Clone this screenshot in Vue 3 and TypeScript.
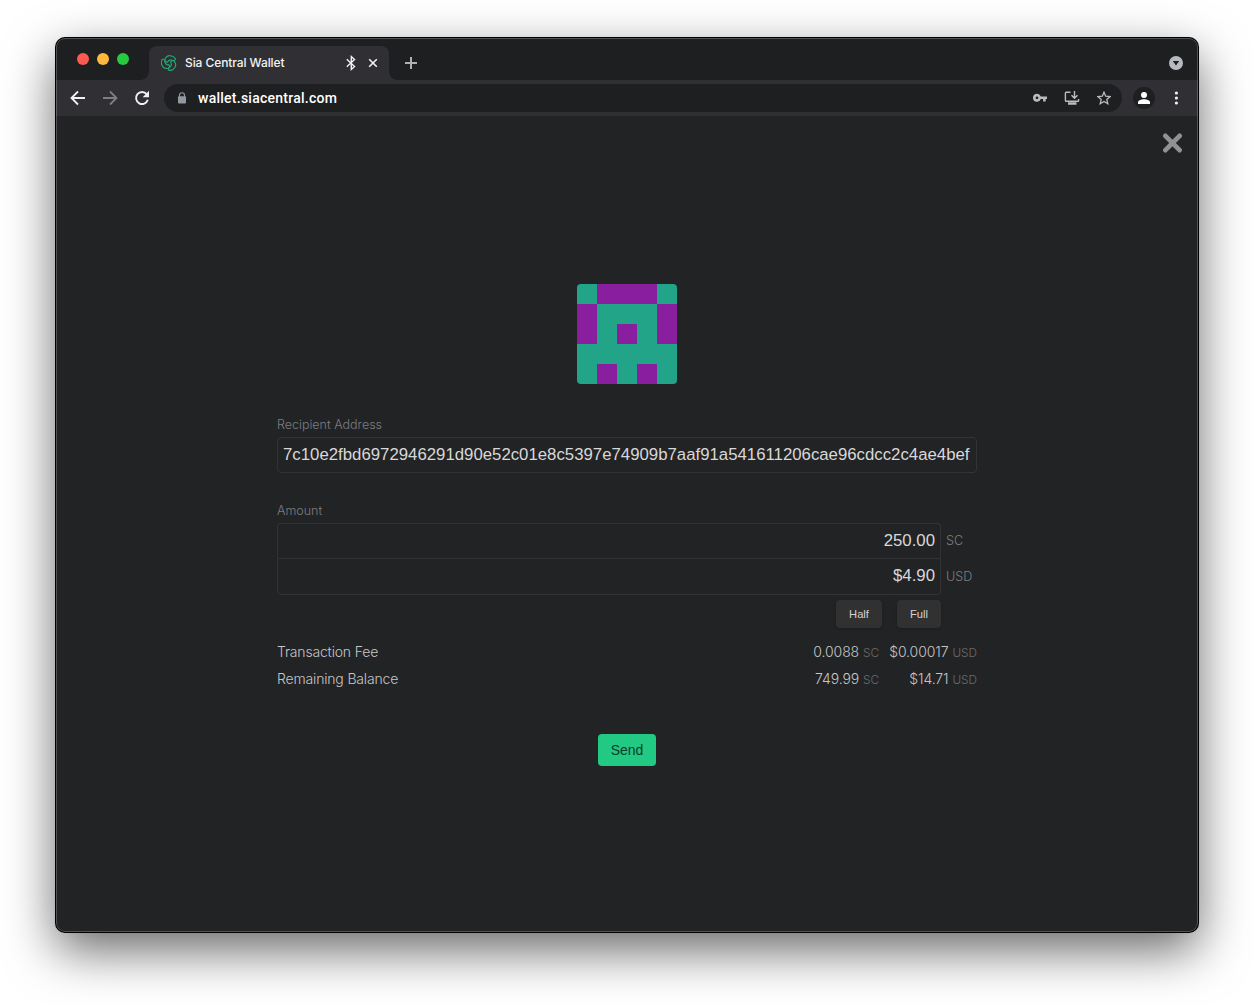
<script setup lang="ts">
import { ref } from 'vue'

interface SummaryRow {
  label: string
  sc: string
  usd: string
}

const address = ref('7c10e2fbd6972946291d90e52c01e8c5397e74909b7aaf91a541611206cae96cdcc2c4ae4bef')
const siacoin = ref('250.00')
const currency = ref('$4.90')

const rows: SummaryRow[] = [
  { label: 'Transaction Fee', sc: '0.0088', usd: '$0.00017' },
  { label: 'Remaining Balance', sc: '749.99', usd: '$14.71' },
]

// 5x5 identicon, 1 marks a purple cell
const identicon = ['01110', '10001', '10101', '00000', '01010'].join('').split('')

// the logo is one lobe, turned three times round the centre
const lobes = [0, 120, 240]
</script>

<template>
  <div class="desktop">
    <div class="window">
      <header class="tab-strip">
        <div class="lights"><i class="red" /><i class="yellow" /><i class="green" /></div>
        <div class="tab">
          <svg class="favicon" width="16" height="16" viewBox="0 0 16 16" fill="none" stroke="#1fa873" stroke-width="1.15" stroke-linejoin="round">
            <path
              v-for="angle in lobes"
              :key="angle"
              d="M3.800 4.800C4.600 2.200 6.600.6 9 .7c2.300.1 4.300 1.200 5.400 3.100.2 1.400-1.400 2.100-2.900 1.500C9.200 4.300 7.400 5 6.400 7.200 4.700 7 3.700 6.100 3.800 4.800z"
              :transform="`rotate(${angle} 8 8)`"
            />
          </svg>
          <span class="tab-title">Sia Central Wallet</span>
          <svg class="bluetooth" width="12" height="16" viewBox="0 0 12 16" fill="none" stroke="#f1f1f2" stroke-width="1.400">
            <path d="M1.800 4.300l7.700 7.200L6.300 14.400V1.600l3.200 2.900-7.700 7.200" />
          </svg>
          <svg class="tab-close" width="10" height="10" viewBox="0 0 10 10" stroke="#f1f1f2" stroke-width="1.600">
            <path d="M1.200 1.200l7.600 7.600M8.800 1.200L1.200 8.800" />
          </svg>
        </div>
        <svg class="new-tab" width="12" height="12" viewBox="0 0 12 12" stroke="#b0b1b5" stroke-width="2">
          <path d="M6 0v12M0 6h12" />
        </svg>
        <svg class="tab-search" width="14" height="14" viewBox="0 0 14 14">
          <circle cx="7" cy="7" r="7" fill="#b7bac0" />
          <path d="M3.800 5h6.400L7 9.500z" fill="#1e1f21" />
        </svg>
      </header>

      <nav class="toolbar">
        <svg width="16" height="16" viewBox="0 0 16 16" fill="none" stroke="#f1f1f2" stroke-width="1.800">
          <path d="M15 8H2.300M8 1.500L1.500 8 8 14.500" />
        </svg>
        <svg width="16" height="16" viewBox="0 0 16 16" fill="none" stroke="#7e7e81" stroke-width="1.800">
          <path d="M1 8h12.700M8 1.500L14.500 8 8 14.500" />
        </svg>
        <svg width="16" height="16" viewBox="0 0 16 16" fill="none" stroke="#f1f1f2" stroke-width="1.900">
          <path d="M13.800 9.800A6 6 0 1 1 12.700 4.200" />
          <path d="M15 .8v6.500H8.700z" fill="#f1f1f2" stroke="none" />
        </svg>
        <div class="omnibox">
          <svg class="lock" width="10" height="12" viewBox="0 0 10 12">
            <path d="M2.500 5V3.200a2.500 2.500 0 0 1 5 0V5" fill="none" stroke="#9298a0" stroke-width="1.100" />
            <rect x="1" y="4.300" width="8" height="7.200" rx=".9" fill="#9298a0" />
          </svg>
          <span class="url">wallet.siacentral.com</span>
          <svg class="key" width="14" height="10" viewBox="0 0 14 10" fill="#bcbcbd">
            <path fill-rule="evenodd" d="M4 .8a4 4 0 1 0 3.800 5.300h2.300v2.500h2.600V6.100H14V3.500H7.800A4 4 0 0 0 4 .8zm0 2.600a1.400 1.400 0 1 1 0 2.800 1.400 1.400 0 0 1 0-2.800z" />
          </svg>
          <svg class="install" width="16" height="14" viewBox="0 0 16 14" fill="none" stroke="#bcbcbd" stroke-width="1.400">
            <path d="M6.500 1.200H2.200q-.8 0-.8.800v7.500q0 .8.800.8h11.600q.8 0 .8-.8V8M10.500 0v6.800M7.500 4.200l3 3 3-3" />
            <path d="M4 12.500h8.500" stroke-width="2.400" />
          </svg>
          <svg class="star" width="14" height="14" viewBox="0 0 14 14" fill="none" stroke="#bcbcbd" stroke-width="1.300">
            <path d="M7 1.200l1.700 4 4.400.4-3.300 2.800 1 4.300L7 10.400l-3.800 2.300 1-4.300L.9 5.600l4.400-.4z" />
          </svg>
        </div>
        <div class="avatar">
          <svg width="12" height="12" viewBox="0 0 12 12" fill="#fff">
            <circle cx="6" cy="3" r="3" />
            <path d="M0 12v-1.700C0 8.200 3.500 7.200 6 7.200s6 1 6 3.100V12z" />
          </svg>
        </div>
        <svg class="menu" width="4" height="14" viewBox="0 0 4 14" fill="#f1f1f2">
          <circle cx="2.400" cy="2" r="1.600" /><circle cx="2.400" cy="7" r="1.600" /><circle cx="2.400" cy="12" r="1.600" />
        </svg>
      </nav>

      <main class="page">
        <svg class="close" width="20" height="20" viewBox="0 0 20 20" stroke="#909192" stroke-width="4.800" stroke-linecap="round">
          <path d="M2.400 2.900l14.200 14.200M16.600 2.900L2.400 17.100" />
        </svg>

        <div class="form">
          <div class="identicon">
            <i v-for="(cell, i) in identicon" :key="i" :class="{ on: cell === '1' }" />
          </div>

          <label class="label">Recipient Address</label>
          <input v-model="address" class="input address" type="text" spellcheck="false">

          <label class="label amount-label">Amount</label>
          <div class="amounts">
            <div class="amount-inputs">
              <input v-model="siacoin" class="input first" type="text">
              <input v-model="currency" class="input second" type="text">
            </div>
            <div class="units"><span>SC</span><span>USD</span></div>
          </div>
          <div class="fills">
            <button class="fill half">Half</button>
            <button class="fill full">Full</button>
          </div>

          <div class="summary">
            <div v-for="row in rows" :key="row.label" class="row">
              <span class="name">{{ row.label }}</span>
              <span class="value">{{ row.sc }} <small>SC</small></span>
              <span class="value usd">{{ row.usd }} <small>USD</small></span>
            </div>
          </div>

          <button class="send">Send</button>
        </div>
      </main>
    </div>
  </div>
</template>

<style>
body {
  margin: 0;
  background: #fff;
}
</style>

<style scoped>
* {
  box-sizing: border-box;
}

svg {
  display: block;
  flex: none;
}

.desktop {
  width: 1254px;
  height: 1006px;
  padding: 38px 56px 74px;
  overflow: hidden;
}

.window {
  position: relative;
  width: 1142px;
  height: 894px;
  overflow: hidden;
  border-radius: 9px;
  background: #222325;
  box-shadow: 0 0 0 1px #000, 0 18px 50px rgba(0, 0, 0, 0.6), 0 0 2px rgba(0, 0, 0, 0.3);
  font-family: Inter, sans-serif;
}

/* the light hairline over the window's edge */
.window::after {
  content: '';
  position: absolute;
  inset: 0;
  border: 1px solid rgba(255, 255, 255, 0.22);
  border-radius: 9px;
  pointer-events: none;
}

.tab-strip {
  display: flex;
  height: 42px;
  padding-left: 21px;
  background: #1e1f21;
}

.lights {
  display: flex;
  gap: 8px;
  width: 72px;
  padding-top: 15px;
}

.lights i {
  width: 12px;
  height: 12px;
  border-radius: 50%;
}

.red { background: #ff5a52; }
.yellow { background: #ffb83d; }
.green { background: #28c840; }

.tab {
  position: relative;
  display: flex;
  align-items: center;
  width: 240px;
  height: 34px;
  margin-top: 8px;
  padding: 0 11px 0 12px;
  border-radius: 8px 8px 0 0;
  background: #303034;
}

.tab::before,
.tab::after {
  content: '';
  position: absolute;
  bottom: 0;
  width: 8px;
  height: 8px;
}

.tab::before {
  right: 100%;
  background: radial-gradient(circle at 0 0, transparent 7.5px, #303034 8px);
}

.tab::after {
  left: 100%;
  background: radial-gradient(circle at 100% 0, transparent 7.5px, #303034 8px);
}

.tab-title {
  margin-left: 8px;
  color: #f3f3f4;
  font: 500 12px/16px Inter, sans-serif;
  letter-spacing: -0.08px;
  white-space: nowrap;
}

.bluetooth {
  margin-left: auto;
}

.tab-close {
  margin-left: 11px;
}

.new-tab {
  margin: 19px 0 0 16px;
}

.tab-search {
  margin: 18px 15px 0 auto;
}

.toolbar {
  display: flex;
  align-items: center;
  height: 36px;
  padding: 0 20px 0 14px;
  background: #303034;
}

.toolbar > svg + svg:not(.menu) {
  margin-left: 16px;
}

.omnibox {
  display: flex;
  align-items: center;
  width: 958px;
  height: 28px;
  margin-left: 14px;
  padding: 0 11px 0 13px;
  border-radius: 14px;
  background: #1e1f21;
}

.url {
  margin-left: 11px;
  color: #fff;
  font: 500 14px/20px Roboto, sans-serif;
  letter-spacing: 0.25px;
}

.key {
  margin-left: auto;
}

.install {
  margin-left: 17px;
}

.star {
  margin-left: 17px;
}

.avatar {
  display: flex;
  align-items: center;
  justify-content: center;
  width: 22px;
  height: 22px;
  margin-left: 11px;
  border-radius: 50%;
  background: #1e1f21;
}

.menu {
  margin-left: auto;
}

.page {
  position: relative;
  display: flex;
  justify-content: center;
  height: 816px;
}

.close {
  position: absolute;
  top: 17px;
  right: 15px;
}

.form {
  display: flex;
  flex-direction: column;
  width: 700px;
  padding-top: 168px;
}

.identicon {
  display: grid;
  grid-template: repeat(5, 20px) / repeat(5, 20px);
  align-self: center;
  overflow: hidden;
  border-radius: 4px;
  background: #22a489;
}

.identicon .on {
  background: #891f9f;
}

.label {
  height: 16px;
  margin: 33px 0 4px;
  color: #7d7e80;
  font-size: 12.5px;
  font-weight: 300;
  line-height: 16px;
}

.amount-label {
  margin-top: 30px;
}

.input {
  display: block;
  width: 100%;
  height: 36px;
  margin: 0;
  padding: 0 5px;
  border: 1px solid #323335;
  border-radius: 4px;
  outline: none;
  background: transparent;
  color: #d8d8d9;
  font: 16.8px "Liberation Sans", Arial, sans-serif;
}

.amounts {
  display: flex;
}

.amount-inputs {
  width: 664px;
}

.amount-inputs .input {
  text-align: right;
}

.amount-inputs .first {
  border-bottom: 0;
  border-radius: 4px 4px 0 0;
  height: 35px;
}

.amount-inputs .second {
  height: 37px;
  border-radius: 0 0 4px 4px;
  padding-bottom: 2px;
}

.units {
  display: flex;
  flex-direction: column;
  width: 36px;
  height: 72px;
  padding-left: 5px;
  color: #7d7e80;
  font-size: 12.6px;
  font-weight: 300;
}

.units span {
  height: 36px;
  line-height: 36px;
}

.fills {
  display: flex;
  justify-content: flex-end;
  gap: 15px;
  margin: 5px 36px 0 0;
}

button {
  padding: 0;
  border: 0;
  border-radius: 4px;
}

.fill {
  width: 46px;
  height: 28px;
  background: #313131;
  color: #d2d2d2;
  font: 11.2px "Liberation Sans", Arial, sans-serif;
  box-shadow: 0 1px 3px rgba(0, 0, 0, 0.2);
}

.fill.full {
  width: 44px;
}

.summary {
  margin-top: 10px;
}

.row {
  display: flex;
  height: 27px;
  color: #c6c6c7;
  font-size: 14px;
  font-weight: 300;
  line-height: 27px;
  white-space: nowrap;
}

.name {
  flex: 1;
  letter-spacing: -0.17px;
}

.value {
  letter-spacing: -0.08px;
}

.value small {
  color: #6a6b6d;
  font-size: 11.8px;
  letter-spacing: 0;
}

.usd {
  width: 98px;
  text-align: right;
}

.send {
  align-self: center;
  width: 58px;
  height: 32px;
  margin-top: 42px;
  background: #21c982;
  color: #0d3d2b;
  font: 14px "Liberation Sans", Arial, sans-serif;
}
</style>
